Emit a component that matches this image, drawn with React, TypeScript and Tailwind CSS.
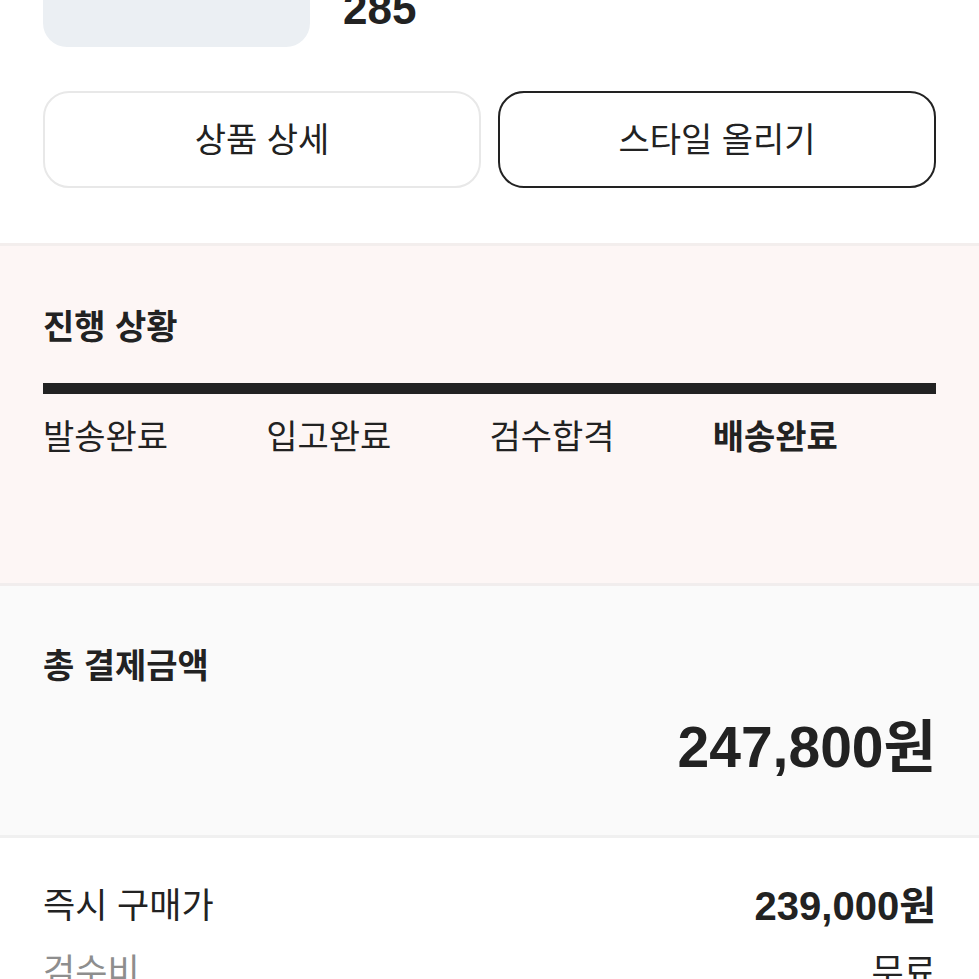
import React from 'react';

const steps = ['발송완료', '입고완료', '검수합격', '배송완료'];

export default function App() {
  const font = { fontFamily: '"Liberation Sans", "Noto Sans CJK KR", sans-serif' };

  return (
    <div className="min-h-screen bg-white text-[#222] overflow-hidden" style={font}>
      {/* Product summary (scrolled partly out of view) */}
      <div className="px-[43px] pb-[55px]">
        <div className="-mt-[220px] flex">
          <div className="w-[267px] h-[267px] shrink-0 rounded-[24px] bg-[#ebeff3]" />
          <div className="ml-[33px] flex flex-col justify-end pb-[12px]">
            <p className="text-[44px] leading-[52px] font-bold">285</p>
          </div>
        </div>

        <div className="mt-[44px] grid grid-cols-2 gap-[17px]">
          <button className="h-[97px] rounded-[26px] border-2 border-[#e8e8e8] bg-white text-[34px] leading-[42px] text-[#222]">
            상품 상세
          </button>
          <button className="h-[97px] rounded-[26px] border-2 border-[#222] bg-white text-[34px] leading-[42px] text-[#222]">
            스타일 올리기
          </button>
        </div>
      </div>

      {/* Progress */}
      <div className="border-t-[3px] border-[#f3eeed] bg-[#fdf6f5] px-[43px] pt-[60px] pb-[125px]">
        <h2 className="text-[34px] leading-[42px] font-bold">진행 상황</h2>
        <div className="mt-[35px] h-[11px] bg-[#222]" />
        <div className="mt-[22px] grid grid-cols-4">
          {steps.map((s, i) => (
            <span
              key={s}
              className={i === steps.length - 1 ? 'text-[34px] leading-[42px] font-bold' : 'text-[34px] leading-[42px]'}
            >
              {s}
            </span>
          ))}
        </div>
      </div>

      {/* Total */}
      <div className="border-t-[3px] border-[#f1eded] bg-[#fafafa] px-[43px] pt-[59px] pb-[56px]">
        <h2 className="text-[34px] leading-[42px] font-bold">총 결제금액</h2>
        <p className="mt-[28px] text-right text-[57px] leading-[64px] font-bold">247,800원</p>
      </div>

      {/* Breakdown */}
      <div className="border-t-[3px] border-[#f0f0f0] bg-white px-[43px] pt-[47px]">
        <div className="flex items-center justify-between">
          <span className="text-[35px] leading-[42px]">즉시 구매가</span>
          <span className="text-[40px] leading-[42px] font-bold">239,000원</span>
        </div>
        <div className="mt-[24px] flex items-center justify-between">
          <span className="text-[35px] leading-[42px] text-[#8e8e8e]">검수비</span>
          <span className="text-[35px] leading-[42px]">무료</span>
        </div>
      </div>
    </div>
  );
}
